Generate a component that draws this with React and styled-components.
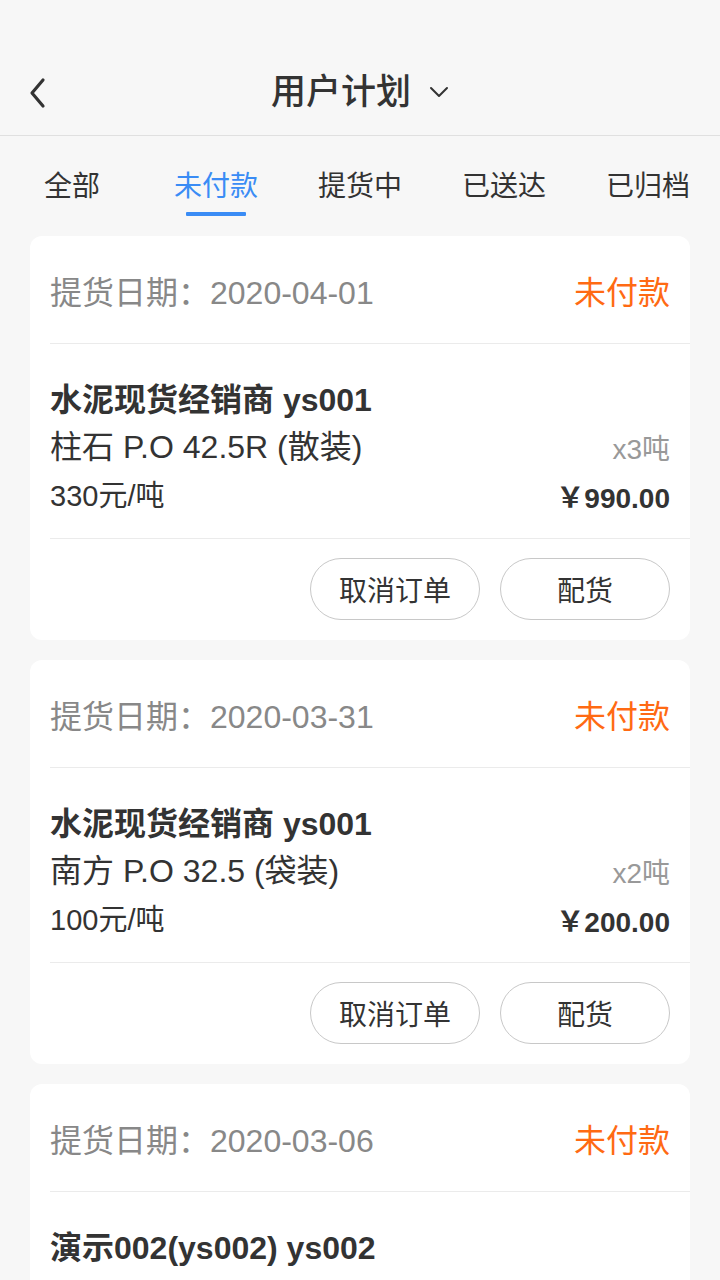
import React from 'react';
import styled, { createGlobalStyle } from 'styled-components';

const FONT = '"Liberation Sans", "Noto Sans CJK SC", sans-serif';

const GlobalStyle = createGlobalStyle`
  html, body {
    margin: 0;
    padding: 0;
    background: #f7f7f7;
    font-family: ${FONT};
    color: #333;
  }
  * { box-sizing: border-box; }
`;

const orders = [
  {
    date: '2020-04-01',
    shop: '水泥现货经销商 ys001',
    product: '柱石 P.O 42.5R (散装)',
    qty: 'x3吨',
    unit: '330元/吨',
    total: '￥990.00',
  },
  {
    date: '2020-03-31',
    shop: '水泥现货经销商 ys001',
    product: '南方 P.O 32.5 (袋装)',
    qty: 'x2吨',
    unit: '100元/吨',
    total: '￥200.00',
  },
  {
    date: '2020-03-06',
    shop: '演示002(ys002) ys002',
    product: '',
    qty: '',
    unit: '',
    total: '',
  },
];

const tabs = ['全部', '未付款', '提货中', '已送达', '已归档'];

export default function App() {
  return (
    <Page>
      <GlobalStyle />
      <StatusBar />
      <Header>
        <BackButton>
          <svg width="22" height="34" viewBox="0 0 22 34" fill="none">
            <path d="M16 4 L5 17 L16 30" stroke="#333" strokeWidth="3.2" strokeLinecap="round" strokeLinejoin="round" />
          </svg>
        </BackButton>
        <Title>
          用户计划
          <svg width="20" height="12" viewBox="0 0 20 12" fill="none">
            <path d="M2 2 L10 10 L18 2" stroke="#333" strokeWidth="2" strokeLinecap="round" strokeLinejoin="round" />
          </svg>
        </Title>
      </Header>
      <Tabs>
        {tabs.map((t, i) => (
          <Tab key={t} active={i === 1}>{t}</Tab>
        ))}
      </Tabs>
      <List>
        {orders.map((o) => (
          <Card key={o.date}>
            <CardHead>
              <DateText>提货日期：{o.date}</DateText>
              <Status>未付款</Status>
            </CardHead>
            <CardBody>
              <Shop>{o.shop}</Shop>
              {o.product && (
                <>
                  <Row gap={4}>
                    <Product>{o.product}</Product>
                    <Qty>{o.qty}</Qty>
                  </Row>
                  <Row gap={8}>
                    <Unit>{o.unit}</Unit>
                    <Total>{o.total}</Total>
                  </Row>
                </>
              )}
            </CardBody>
            {o.product && (
              <Actions>
                <PillButton>取消订单</PillButton>
                <PillButton>配货</PillButton>
              </Actions>
            )}
          </Card>
        ))}
      </List>
    </Page>
  );
}

const Page = styled.div`
  width: 720px;
  height: 1280px;
  overflow: hidden;
  background: #f7f7f7;
`;

const StatusBar = styled.div`
  height: 50px;
`;

const Header = styled.div`
  position: relative;
  height: 86px;
  display: flex;
  align-items: center;
  justify-content: center;
  border-bottom: 1px solid #e0e0e0;
`;

const BackButton = styled.div`
  position: absolute;
  left: 27px;
  top: 26px;
  display: flex;
`;

const Title = styled.div`
  display: flex;
  align-items: center;
  gap: 18px;
  font-size: 35px;
  font-weight: 500;
  line-height: 44px;
  color: #333;
  margin-top: -2px;
`;

const Tabs = styled.div`
  display: grid;
  grid-template-columns: repeat(5, 1fr);
  height: 100px;
`;

const Tab = styled.div`
  position: relative;
  display: flex;
  justify-content: center;
  padding-top: 32px;
  font-size: 28px;
  line-height: 38px;
  color: ${(p) => (p.active ? '#3a8cf5' : '#333')};

  &::after {
    content: '';
    display: ${(p) => (p.active ? 'block' : 'none')};
    position: absolute;
    left: 50%;
    top: 76px;
    width: 60px;
    height: 4px;
    margin-left: -30px;
    background: #3a8cf5;
    border-radius: 1px;
  }
`;

const List = styled.div`
  display: flex;
  flex-direction: column;
  gap: 20px;
  padding: 0 30px;
`;

const Card = styled.div`
  background: #fff;
  border-radius: 12px;
  padding-left: 20px;
`;

const CardHead = styled.div`
  height: 108px;
  display: flex;
  align-items: center;
  justify-content: space-between;
  padding-right: 20px;
  border-bottom: 1px solid #ebebeb;
`;

const DateText = styled.div`
  font-size: 32px;
  color: #888;
`;

const Status = styled.div`
  font-size: 32px;
  color: #ff6a13;
`;

const CardBody = styled.div`
  padding: 34px 20px 22px 0;
  border-bottom: 1px solid #ebebeb;
  display: flex;
  flex-direction: column;
`;

const Shop = styled.div`
  font-size: 32px;
  font-weight: 700;
  line-height: 44px;
  color: #333;
`;

const Row = styled.div`
  display: flex;
  justify-content: space-between;
  align-items: center;
  margin-top: ${(p) => p.gap}px;
`;

const Product = styled.div`
  font-size: 32px;
  line-height: 42px;
  color: #333;
`;

const Qty = styled.div`
  font-size: 28px;
  color: #999;
`;

const Unit = styled.div`
  font-size: 29px;
  line-height: 40px;
  color: #333;
`;

const Total = styled.div`
  font-size: 28px;
  font-weight: 700;
  color: #333;
`;

const Actions = styled.div`
  display: flex;
  justify-content: flex-end;
  gap: 20px;
  padding: 19px 20px 20px 0;
`;

const PillButton = styled.button`
  width: 170px;
  height: 62px;
  border: 1px solid #c8c8c8;
  border-radius: 31px;
  background: #fff;
  font-family: ${FONT};
  font-size: 28px;
  color: #333;
  padding: 0;
`;
